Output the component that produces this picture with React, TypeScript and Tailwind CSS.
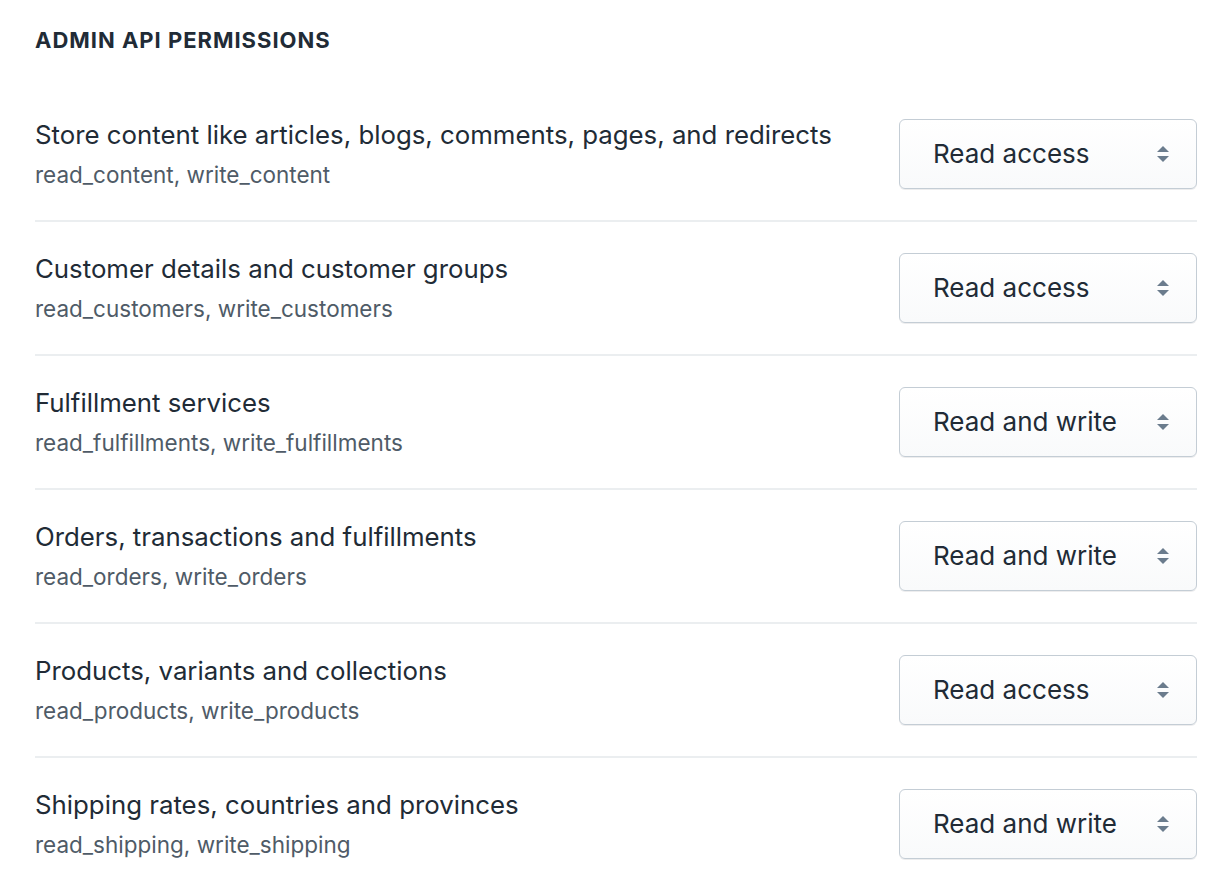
import { useState } from "react";

type Access = "Read access" | "Read and write" | "No access";

type Permission = {
  title: string;
  scopes: string;
  access: Access;
};

const PERMISSIONS: Permission[] = [
  {
    title: "Store content like articles, blogs, comments, pages, and redirects",
    scopes: "read_content, write_content",
    access: "Read access",
  },
  {
    title: "Customer details and customer groups",
    scopes: "read_customers, write_customers",
    access: "Read access",
  },
  {
    title: "Fulfillment services",
    scopes: "read_fulfillments, write_fulfillments",
    access: "Read and write",
  },
  {
    title: "Orders, transactions and fulfillments",
    scopes: "read_orders, write_orders",
    access: "Read and write",
  },
  {
    title: "Products, variants and collections",
    scopes: "read_products, write_products",
    access: "Read access",
  },
  {
    title: "Shipping rates, countries and provinces",
    scopes: "read_shipping, write_shipping",
    access: "Read and write",
  },
];

const OPTIONS: Access[] = ["No access", "Read access", "Read and write"];

function SelectArrows() {
  return (
    <svg width="14" height="22" viewBox="0 0 14 22" aria-hidden="true" className="shrink-0">
      <path d="M7 3 L13 9 L1 9 Z" fill="#6b7c8d" />
      <path d="M1 13 L13 13 L7 19 Z" fill="#6b7c8d" />
    </svg>
  );
}

function AccessSelect({ value, onChange }: { value: Access; onChange: (v: Access) => void }) {
  return (
    <label className="relative flex h-[70px] w-[298px] shrink-0 items-center justify-between rounded-[6px] border border-[#c4cdd5] bg-gradient-to-b from-white to-[#f9fafb] pl-[33px] pr-[26px] shadow-[0_1px_0_rgba(22,29,37,0.08)]">
      <span className="text-[26px] leading-none text-[#212b36]">{value}</span>
      <SelectArrows />
      <select
        value={value}
        onChange={(event) => onChange(event.target.value as Access)}
        className="absolute inset-0 cursor-pointer opacity-0"
      >
        {OPTIONS.map((option) => (
          <option key={option} value={option}>
            {option}
          </option>
        ))}
      </select>
    </label>
  );
}

export default function App() {
  const [permissions, setPermissions] = useState(PERMISSIONS);

  return (
    <div
      className="min-h-[890px] bg-white pl-[35px] pr-[25px] pt-[26px]"
      style={{ fontFamily: "Inter, 'Noto Sans', sans-serif" }}
    >
      <h2 className="text-[22px] font-bold uppercase leading-[28px] tracking-[0.045em] text-[#212b36]">
        Admin API permissions
      </h2>

      <div className="mt-[34px]">
        {permissions.map((permission, index) => (
          <div
            key={permission.scopes}
            className={`flex items-center justify-between py-[31px] ${
              index < permissions.length - 1 ? "border-b-2 border-[#ebeef0]" : ""
            }`}
          >
            <div className="flex flex-col">
              <span className="text-[25.8px] leading-[32px] text-[#212b36]">{permission.title}</span>
              <span className="mt-[10px] text-[22.5px] leading-[28px] text-[#4f5b67]">
                {permission.scopes}
              </span>
            </div>
            <AccessSelect
              value={permission.access}
              onChange={(access) =>
                setPermissions((current) =>
                  current.map((item, i) => (i === index ? { ...item, access } : item)),
                )
              }
            />
          </div>
        ))}
      </div>
    </div>
  );
}
